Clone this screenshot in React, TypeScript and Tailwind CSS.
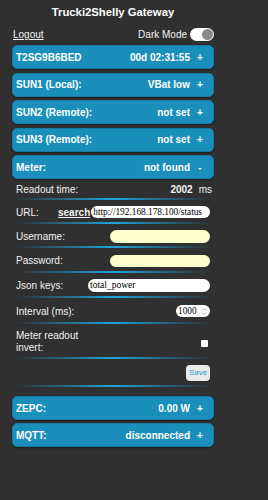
import React from "react";

const panels = [
  { label: "T2SG9B6BED", value: "00d 02:31:55", sign: "+" },
  { label: "SUN1 (Local):", value: "VBat low", sign: "+" },
  { label: "SUN2 (Remote):", value: "not set", sign: "+" },
  { label: "SUN3 (Remote):", value: "not set", sign: "+" },
  { label: "Meter:", value: "not found", sign: "-" },
];

function Panel({ label, value, sign }: { label: string; value: string; sign: string }) {
  return (
    <div className="h-[24px] rounded-[5px] bg-[#1b8fbb] border border-[#167ba3] shadow-[0_1px_2px_rgba(0,0,0,0.4)] flex items-center pl-[3px] pr-[8px] text-[10px] font-bold text-white">
      <span className="flex-1">{label}</span>
      <span>{value}</span>
      <span className="w-[10px] ml-[5px] text-center">{sign}</span>
    </div>
  );
}

function Sep() {
  return <div className="h-[2px] mx-[4px] bg-linear-to-r from-transparent via-[#1ba6de] to-transparent" />;
}

function Row({ h, children }: { h: string; children: React.ReactNode }) {
  return <div className={`${h} flex items-center px-[4px] pt-[2px] text-[10px] text-[#f2f2f2]`}>{children}</div>;
}

export default function App() {
  return (
    <div className="min-h-[500px] bg-[#303030] font-['Liberation_Sans',Arial,sans-serif]">
      <div className="ml-[12px] w-[202px]">
        <div className="h-[24px] flex items-center justify-center text-[11.3px] font-bold text-white">
          Trucki2Shelly Gateway
        </div>
        <div className="h-[21px] flex items-center text-[10px] text-[#f2f2f2]">
          <span className="flex-1 pl-[1px] underline">Logout</span>
          <span className="mr-[3px]">Dark Mode</span>
          <span className="w-[24px] h-[13px] rounded-full bg-white flex items-center justify-end pr-[1px]">
            <span className="w-[11px] h-[11px] rounded-full bg-[#8a8a8a]" />
          </span>
        </div>
        <div className="flex flex-col gap-[3.5px]">
          {panels.map((p) => (
            <Panel key={p.label} {...p} />
          ))}
        </div>
        <Row h="h-[19px]">
          <span className="flex-1">Readout time:</span>
          <span className="font-bold">2002</span>
          <span className="ml-[6px] mr-[-2px]">ms</span>
        </Row>
        <Sep />
        <Row h="h-[22px]">
          <span className="w-[42px]">URL:</span>
          <span className="font-bold underline">search</span>
          <span className="ml-[1px] flex-1 h-[12px] rounded-full bg-white text-black font-['Liberation_Serif',serif] text-[9.3px] leading-[12px] pl-[2px] overflow-hidden whitespace-nowrap">
            http://192.168.178.100/status
          </span>
        </Row>
        <Sep />
        <Row h="h-[22px]">
          <span className="flex-1">Username:</span>
          <span className="w-[100px] h-[13px] rounded-full bg-[#ffffcc]" />
        </Row>
        <Sep />
        <Row h="h-[23px]">
          <span className="flex-1">Password:</span>
          <span className="w-[100px] h-[12px] rounded-full bg-[#ffffcc]" />
        </Row>
        <Sep />
        <Row h="h-[23px]">
          <span className="flex-1">Json keys:</span>
          <span className="w-[122px] h-[13px] rounded-full bg-white text-black font-['Liberation_Serif',serif] text-[9.5px] leading-[13px] pl-[2px]">
            total_power
          </span>
        </Row>
        <Sep />
        <Row h="h-[24px]">
          <span className="flex-1">Interval (ms):</span>
          <span className="w-[34px] h-[12px] rounded-full bg-white text-black font-['Liberation_Serif',serif] text-[9.3px] leading-[12px] pl-[2px] flex items-center">
            <span className="flex-1">1000</span>
            <svg width="6" height="9" viewBox="0 0 6 9" className="mr-[3px]" fill="none" stroke="#b0b0b0" strokeWidth="1">
              <path d="M1 3.5 L3 1.5 L5 3.5" />
              <path d="M1 5.5 L3 7.5 L5 5.5" />
            </svg>
          </span>
        </Row>
        <Sep />
        <Row h="h-[33px]">
          <span className="flex-1 leading-[12px]">
            Meter readout
            <br />
            invert:
          </span>
          <span className="w-[7px] h-[7px] rounded-[1px] bg-white mr-[2px] mt-[3px]" />
        </Row>
        <Sep />
        <Row h="h-[26px]">
          <span className="flex-1" />
          <span className="w-[24px] h-[16px] rounded-[4px] bg-[#eaeaea] text-[#2b9fd4] text-[8px] flex items-center justify-center">
            Save
          </span>
        </Row>
        <Sep />
        <div className="mt-[9px] flex flex-col gap-[3px]">
          <Panel label="ZEPC:" value="0.00 W" sign="+" />
          <Panel label="MQTT:" value="disconnected" sign="+" />
        </div>
      </div>
    </div>
  );
}
